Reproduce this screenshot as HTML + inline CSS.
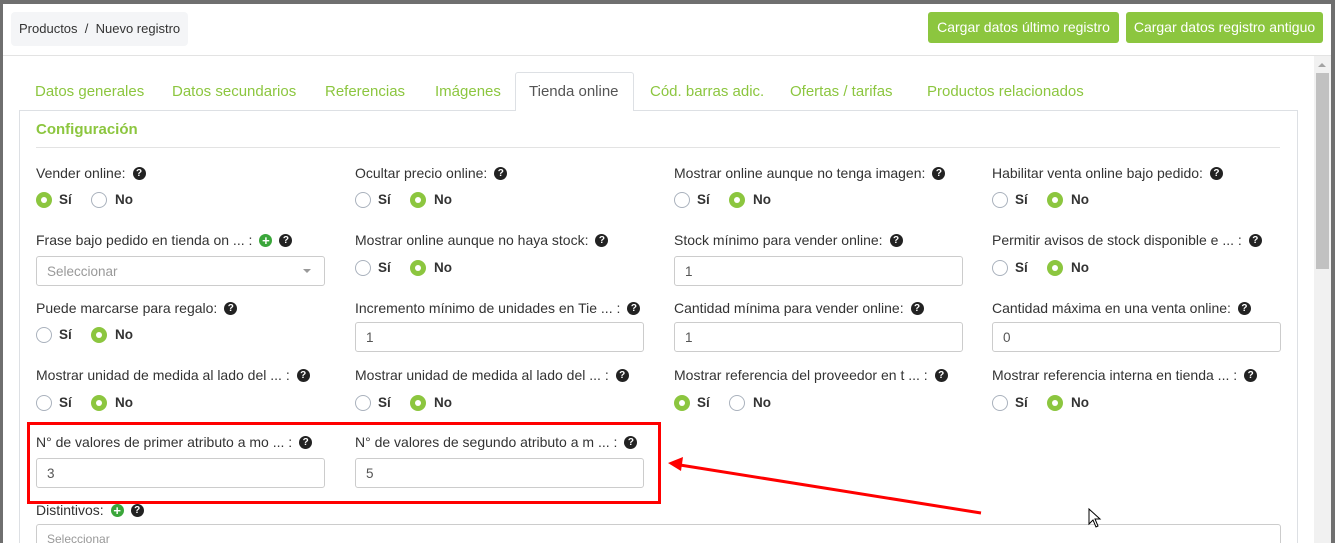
<!DOCTYPE html>
<html style="overflow:hidden;height:543px"><head><meta charset="utf-8"><style>
*{box-sizing:border-box;margin:0;padding:0}
body{width:1335px;height:543px;overflow:hidden;background:#6f6f6f;font-family:"Liberation Sans",sans-serif;position:relative;color:#333}
.a{position:absolute;white-space:nowrap}
.modal{position:absolute;left:3px;top:4px;width:1328px;height:539px;background:#fff}
.lbl{font-size:14px;color:#333;line-height:16px;margin-top:1px}
.q{display:inline-block;width:13px;height:13px;border-radius:50%;background:#222;color:#fff;font-size:10px;font-weight:bold;text-align:center;line-height:13px;vertical-align:top;margin-top:2px;margin-left:7px}
.p{display:inline-block;width:13px;height:13px;border-radius:50%;background:#3aa63a;color:#fff;font-size:13px;font-weight:bold;text-align:center;line-height:13px;vertical-align:top;margin-top:2px;margin-left:7px}
.r{position:absolute;width:16px;height:16px;border-radius:50%;border:1px solid #aab2bd;background:#fff}
.r.c{border:none;background:#8cc63f}
.r.c:after{content:"";position:absolute;left:5px;top:5px;width:6px;height:6px;border-radius:50%;background:#fff}
.rt{position:absolute;font-size:13.5px;font-weight:bold;color:#333}
.in{position:absolute;width:289px;height:30px;border:1px solid #ccc;border-radius:3px;font-size:13.5px;color:#555;padding:7px 10px}
.tab{position:absolute;top:83px;font-size:15px;color:#8cc63f}
.btn{position:absolute;top:12px;height:31px;background:#8cc63f;border-radius:3px;color:#fff;font-size:14px;line-height:31px;text-align:center}
</style></head><body>
<div class="modal"></div>
<div class="a" style="left:11px;top:12px;width:177px;height:34px;background:#f4f5f7;border-radius:4px;font-size:13px;line-height:34px;padding-left:8px;color:#333">Productos &nbsp;/&nbsp; Nuevo registro</div>
<div class="btn" style="left:928px;width:191px">Cargar datos último registro</div>
<div class="btn" style="left:1126px;width:197px">Cargar datos registro antiguo</div>
<div class="a" style="left:3px;top:55px;width:1328px;height:1px;background:#e3e3e3"></div>
<div class="a" style="left:1314px;top:56px;width:17px;height:487px;background:#f1f1f1"></div>
<div class="a" style="left:1316px;top:73px;width:13px;height:196px;background:#c1c1c1"></div>
<div class="a" style="left:1318px;top:63px;width:0;height:0;border-left:4px solid transparent;border-right:4px solid transparent;border-bottom:4px solid #a3a3a3"></div>
<div class="a" style="left:19px;top:110px;width:1279px;height:440px;border:1px solid #dde0e4"></div>
<div class="a" style="left:515px;top:72px;width:119px;height:39px;border:1px solid #dde0e4;border-bottom:none;background:#fff;border-radius:3px 3px 0 0"></div>
<div class="tab" style="left:35px">Datos generales</div>
<div class="tab" style="left:172px">Datos secundarios</div>
<div class="tab" style="left:325px">Referencias</div>
<div class="tab" style="left:435px">Imágenes</div>
<div class="tab" style="left:529px;color:#555">Tienda online</div>
<div class="tab" style="left:650px">Cód. barras adic.</div>
<div class="tab" style="left:790px">Ofertas / tarifas</div>
<div class="tab" style="left:927px">Productos relacionados</div>
<div class="a" style="left:36px;top:121px;font-size:15px;font-weight:bold;color:#8cc63f">Configuración</div>
<div class="a" style="left:36px;top:147px;width:1244px;height:1px;background:#e3e3e3"></div>

<div class="a lbl" style="left:36px;top:164px">Vender online:<span class="q">?</span></div>
<div class="a lbl" style="left:355px;top:164px">Ocultar precio online:<span class="q">?</span></div>
<div class="a lbl" style="left:674px;top:164px">Mostrar online aunque no tenga imagen:<span class="q">?</span></div>
<div class="a lbl" style="left:992px;top:164px">Habilitar venta online bajo pedido:<span class="q">?</span></div>
<div class="r c" style="left:36px;top:192px"></div><div class="rt" style="left:59px;top:192px">Sí</div><div class="r" style="left:91px;top:192px"></div><div class="rt" style="left:115px;top:192px">No</div>
<div class="r" style="left:355px;top:192px"></div><div class="rt" style="left:378px;top:192px">Sí</div><div class="r c" style="left:410px;top:192px"></div><div class="rt" style="left:434px;top:192px">No</div>
<div class="r" style="left:674px;top:192px"></div><div class="rt" style="left:697px;top:192px">Sí</div><div class="r c" style="left:729px;top:192px"></div><div class="rt" style="left:753px;top:192px">No</div>
<div class="r" style="left:992px;top:192px"></div><div class="rt" style="left:1015px;top:192px">Sí</div><div class="r c" style="left:1047px;top:192px"></div><div class="rt" style="left:1071px;top:192px">No</div>

<div class="a lbl" style="left:36px;top:231px">Frase bajo pedido en tienda on ... :<span class="p">+</span><span class="q">?</span></div>
<div class="a lbl" style="left:355px;top:231px">Mostrar online aunque no haya stock:<span class="q">?</span></div>
<div class="a lbl" style="left:674px;top:231px">Stock mínimo para vender online:<span class="q">?</span></div>
<div class="a lbl" style="left:992px;top:231px">Permitir avisos de stock disponible e ... :<span class="q">?</span></div>
<div class="in" style="left:36px;top:256px;color:#999">Seleccionar</div>
<div class="a" style="left:303px;top:269px;border-left:4px solid transparent;border-right:4px solid transparent;border-top:4px solid #999"></div>
<div class="r" style="left:355px;top:260px"></div><div class="rt" style="left:378px;top:260px">Sí</div><div class="r c" style="left:410px;top:260px"></div><div class="rt" style="left:434px;top:260px">No</div>
<div class="in" style="left:674px;top:256px">1</div>
<div class="r" style="left:992px;top:260px"></div><div class="rt" style="left:1015px;top:260px">Sí</div><div class="r c" style="left:1047px;top:260px"></div><div class="rt" style="left:1071px;top:260px">No</div>

<div class="a lbl" style="left:36px;top:299px">Puede marcarse para regalo:<span class="q">?</span></div>
<div class="a lbl" style="left:355px;top:299px">Incremento mínimo de unidades en Tie ... :<span class="q">?</span></div>
<div class="a lbl" style="left:674px;top:299px">Cantidad mínima para vender online:<span class="q">?</span></div>
<div class="a lbl" style="left:992px;top:299px">Cantidad máxima en una venta online:<span class="q">?</span></div>
<div class="r" style="left:36px;top:327px"></div><div class="rt" style="left:59px;top:327px">Sí</div><div class="r c" style="left:91px;top:327px"></div><div class="rt" style="left:115px;top:327px">No</div>
<div class="in" style="left:355px;top:322px">1</div>
<div class="in" style="left:674px;top:322px">1</div>
<div class="in" style="left:992px;top:322px">0</div>

<div class="a lbl" style="left:36px;top:366px">Mostrar unidad de medida al lado del ... :<span class="q">?</span></div>
<div class="a lbl" style="left:355px;top:366px">Mostrar unidad de medida al lado del ... :<span class="q">?</span></div>
<div class="a lbl" style="left:674px;top:366px">Mostrar referencia del proveedor en t ... :<span class="q">?</span></div>
<div class="a lbl" style="left:992px;top:366px">Mostrar referencia interna en tienda ... :<span class="q">?</span></div>
<div class="r" style="left:36px;top:395px"></div><div class="rt" style="left:59px;top:395px">Sí</div><div class="r c" style="left:91px;top:395px"></div><div class="rt" style="left:115px;top:395px">No</div>
<div class="r" style="left:355px;top:395px"></div><div class="rt" style="left:378px;top:395px">Sí</div><div class="r c" style="left:410px;top:395px"></div><div class="rt" style="left:434px;top:395px">No</div>
<div class="r c" style="left:674px;top:395px"></div><div class="rt" style="left:697px;top:395px">Sí</div><div class="r" style="left:729px;top:395px"></div><div class="rt" style="left:753px;top:395px">No</div>
<div class="r" style="left:992px;top:395px"></div><div class="rt" style="left:1015px;top:395px">Sí</div><div class="r c" style="left:1047px;top:395px"></div><div class="rt" style="left:1071px;top:395px">No</div>

<div class="a lbl" style="left:36px;top:433px">N° de valores de primer atributo a mo ... :<span class="q">?</span></div>
<div class="a lbl" style="left:355px;top:433px">N° de valores de segundo atributo a m ... :<span class="q">?</span></div>
<div class="in" style="left:36px;top:458px">3</div>
<div class="in" style="left:355px;top:458px">5</div>

<div class="a lbl" style="left:36px;top:501px">Distintivos:<span class="p">+</span><span class="q">?</span></div>
<div class="in" style="left:36px;top:524px;width:1245px;color:#999;font-size:12px">Seleccionar</div>

<div class="a" style="left:27px;top:422px;width:634px;height:82px;border:3px solid #f00"></div>
<svg class="a" style="left:0;top:0" width="1335" height="543">
<line x1="981" y1="513" x2="680" y2="465" stroke="#f00" stroke-width="3"/>
<polygon points="668,463 683,457 681,471" fill="#f00"/>
<path d="M1089 509 L1089 524 L1093 520 L1096 527 L1098 526 L1095 519 L1100 519 Z" fill="#fff" stroke="#000" stroke-width="1"/>
</svg>
</body></html>
